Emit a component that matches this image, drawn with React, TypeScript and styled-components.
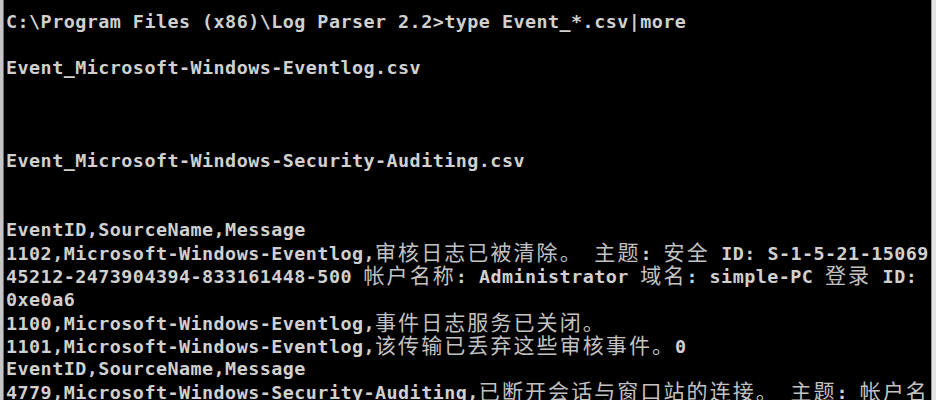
import React from 'react';
import styled, { createGlobalStyle } from 'styled-components';

const GlobalStyle = createGlobalStyle`
  html, body {
    margin: 0;
    padding: 0;
    background: #000;
  }
  body {
    width: 936px;
    height: 400px;
    overflow: hidden;
  }
`;

const Window = styled.div`
  display: flex;
  width: 936px;
  height: 400px;
  background: #000;
`;

const LeftFrame = styled.div`
  width: 3px;
  background: #c6c6c6;
  border-right: 1px solid #6e6e6e;
`;

const Screen = styled.div`
  flex: 1;
  padding: 10px 0 0 2px;
  overflow: hidden;
`;

const ScrollEdge = styled.div`
  width: 4px;
  background: #e2e2e2;
  border-left: 1px solid #9a9a9a;
`;

const Line = styled.div`
  height: 23.125px;
  line-height: 23.125px;
  white-space: pre;
  font-family: "DejaVu Sans Mono", "Liberation Mono", monospace;
  font-weight: bold;
  font-size: 18.4px;
  letter-spacing: 0.46px;
  color: #d0d0d0;
`;

const Wide = styled.span`
  font-family: "Noto Sans CJK SC", sans-serif;
  font-weight: normal;
  font-size: 21px;
  letter-spacing: 2.08px;
  line-height: 20px;
  color: #c2c2c2;
`;

const lines = [
  'C:\\Program Files (x86)\\Log Parser 2.2>type Event_*.csv|more',
  '',
  'Event_Microsoft-Windows-Eventlog.csv',
  '',
  '',
  '',
  'Event_Microsoft-Windows-Security-Auditing.csv',
  '',
  '',
  'EventID,SourceName,Message',
  '1102,Microsoft-Windows-Eventlog,审核日志已被清除。 主题: 安全 ID: S-1-5-21-15069',
  '45212-2473904394-833161448-500 帐户名称: Administrator 域名: simple-PC 登录 ID:',
  '0xe0a6',
  '1100,Microsoft-Windows-Eventlog,事件日志服务已关闭。',
  '1101,Microsoft-Windows-Eventlog,该传输已丢弃这些审核事件。0',
  'EventID,SourceName,Message',
  '4779,Microsoft-Windows-Security-Auditing,已断开会话与窗口站的连接。 主题: 帐户名',
];

// split a console line into runs of narrow (ascii) and wide (cjk) cells
const renderRuns = (text: string) =>
  text.split(/([\u3000-\u303f\u4e00-\u9fff\uff00-\uffef]+)/).map((part, i) =>
    i % 2 === 1 ? <Wide key={i}>{part}</Wide> : <React.Fragment key={i}>{part}</React.Fragment>
  );

const App: React.FC = () => (
  <>
    <GlobalStyle />
    <Window>
      <LeftFrame />
      <Screen>
        {lines.map((text, i) => (
          <Line key={i}>{renderRuns(text)}</Line>
        ))}
      </Screen>
      <ScrollEdge />
    </Window>
  </>
);

export default App;
